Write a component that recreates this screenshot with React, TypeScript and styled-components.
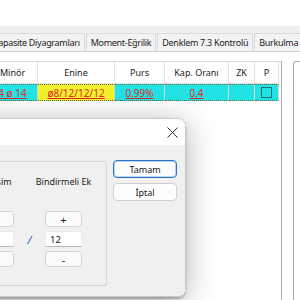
import styled, { createGlobalStyle } from "styled-components";

const GlobalStyle = createGlobalStyle`
  html, body {
    margin: 0;
    padding: 0;
    background: #ffffff;
  }
  body {
    font-family: "Noto Sans", "Open Sans", sans-serif;
    font-size: 9px;
    color: #1b1b1b;
  }
`;

const Screen = styled.div`
  position: relative;
  width: 300px;
  height: 300px;
  overflow: hidden;
  background: #ffffff;
  display: flex;
  flex-direction: column;
`;

const TopSpace = styled.div`
  height: 26px;
  background: #ffffff;
`;

const TabArea = styled.div`
  height: 25px;
  background: #f0f0f0;
  border-bottom: 1px solid #d6d6d6;
  display: flex;
  align-items: flex-end;
`;

const TabStrip = styled.div`
  display: flex;
  margin-left: -12px;
`;

const Tab = styled.div`
  height: 17px;
  padding: 0 4px;
  display: flex;
  align-items: center;
  background: #f3f3f3;
  border: 1px solid #dadada;
  border-bottom: none;
  margin-right: 1px;
  white-space: nowrap;
  letter-spacing: -0.3px;
  color: #222;
`;

const Content = styled.div`
  flex: 1;
  display: flex;
  padding-top: 9px;
  background: #ffffff;
`;

const GridWrap = styled.div`
  width: 281px;
  border-right: 1px solid #a8a8b0;
  display: flex;
  flex-direction: column;
  overflow: hidden;
`;

const Grid = styled.div`
  display: grid;
  grid-template-columns: 50px 77px 50px 64px 26px 24px;
  grid-template-rows: 22px 17px;
  margin-left: -12px;
  border-top: 1px solid #dadada;
`;

const HeadCell = styled.div`
  display: flex;
  align-items: center;
  justify-content: center;
  border-right: 1px solid #e2e2e2;
  border-bottom: 1px solid #e2e2e2;
  white-space: nowrap;
  color: #1b1b1b;
`;

const DataCell = styled.div<{ $bg: string }>`
  display: flex;
  align-items: center;
  justify-content: center;
  background: ${(p) => p.$bg};
  border-top: 1px dotted #6a6a40;
  border-bottom: 1px dotted #6a6a40;
  border-right: 1px solid #d8d8d8;
  color: #e3262a;
  text-decoration: underline;
  white-space: nowrap;
  font-size: 10px;
`;

const Check = styled.span`
  width: 9px;
  height: 9px;
  border: 1px solid #2b6d6d;
  background: transparent;
`;

const SidePanel = styled.div`
  margin-left: 11px;
  flex: 1;
  border: 1px solid #a8a8b0;
  border-right: none;
  border-bottom: none;
  border-top-left-radius: 3px;
`;

const Dialog = styled.div`
  position: absolute;
  left: -114px;
  top: 118px;
  width: 300px;
  height: 179px;
  border-radius: 8px;
  overflow: hidden;
  display: flex;
  flex-direction: column;
  border: 1px solid #c8c8c8;
  box-sizing: border-box;
  box-shadow: 0 4px 30px rgba(0, 0, 0, 0.3), 0 2px 2px rgba(0, 0, 0, 0.25);
`;

const TitleBar = styled.div`
  height: 26px;
  background: #ffffff;
  display: flex;
  align-items: center;
  justify-content: flex-end;
  padding-right: 7px;
`;

const CloseBtn = styled.div`
  width: 12px;
  height: 12px;
  display: flex;
  align-items: center;
  justify-content: center;
`;

const Body = styled.div`
  flex: 1;
  background: #f0f0f0;
  display: flex;
  gap: 6px;
  padding: 15px 8px 10px 13px;
`;

const GroupWrap = styled.div`
  flex: 1;
  display: flex;
  margin-top: 1px;
`;

const GroupBox = styled.div`
  flex: 1;
  border: 1px solid #d8d8d8;
  border-radius: 2px;
  display: grid;
  grid-template-columns: 37px 31px 37px;
  grid-template-rows: 33px 16px 16px 16px;
  row-gap: 4px;
  justify-content: end;
  align-content: start;
  padding: 12px 24px 0 0;
`;

const ColLabel = styled.div<{ $col: number }>`
  grid-column: ${(p) => p.$col};
  grid-row: 1;
  align-self: start;
  height: 14px;
  display: flex;
  align-items: center;
  justify-content: center;
  white-space: nowrap;
`;

const StepBtn = styled.div<{ $col: number; $row: number }>`
  grid-column: ${(p) => p.$col};
  grid-row: ${(p) => p.$row};
  background: #fbfbfb;
  border: 1px solid #d3d3d3;
  border-radius: 4px;
  display: flex;
  align-items: center;
  justify-content: center;
  font-size: 11px;
`;

const Field = styled.div<{ $col: number }>`
  grid-column: ${(p) => p.$col};
  grid-row: 3;
  background: #ffffff;
  border: 1px solid #ececec;
  border-bottom-color: #b8b8b8;
  display: flex;
  align-items: center;
  padding-left: 4px;
  font-size: 9.5px;
`;

const Slash = styled.div`
  grid-column: 2;
  grid-row: 3;
  display: flex;
  align-items: center;
  justify-content: center;
  color: #1b5ea8;
  font-size: 11px;
  font-style: italic;
`;

const ButtonCol = styled.div`
  width: 64px;
  display: flex;
  flex-direction: column;
  gap: 5px;
`;

const DlgButton = styled.div<{ $primary?: boolean }>`
  height: 16px;
  border-radius: 4px;
  background: #fdfdfd;
  border: 1px solid ${(p) => (p.$primary ? "#2a74c4" : "#d0d0d0")};
  box-shadow: ${(p) => (p.$primary ? "inset 0 0 0 1px #b9d5f2" : "none")};
  display: flex;
  align-items: center;
  justify-content: center;
  color: #1b1b1b;
`;

const headers = ["Minör", "Enine", "Purs", "Kap. Oranı", "ZK", "P"];

export default function App() {
  return (
    <>
      <GlobalStyle />
      <Screen>
        <TopSpace />
        <TabArea>
          <TabStrip>
            <Tab>Kapasite Diyagramları</Tab>
            <Tab>Moment-Eğrilik</Tab>
            <Tab>Denklem 7.3 Kontrolü</Tab>
            <Tab>Burkulma</Tab>
          </TabStrip>
        </TabArea>
        <Content>
          <GridWrap>
            <Grid>
              {headers.map((h) => (
                <HeadCell key={h}>{h}</HeadCell>
              ))}
              <DataCell $bg="#22e3e3">4 ø 14</DataCell>
              <DataCell $bg="#f2f22c">ø8/12/12/12</DataCell>
              <DataCell $bg="#22e3e3">0.99%</DataCell>
              <DataCell $bg="#22e3e3">0.4</DataCell>
              <DataCell $bg="#22e3e3" />
              <DataCell $bg="#22e3e3">
                <Check />
              </DataCell>
            </Grid>
          </GridWrap>
          <SidePanel />
        </Content>

        <Dialog>
          <TitleBar>
            <CloseBtn>
              <svg width="11" height="11" viewBox="0 0 11 11">
                <path d="M0.5 0.5 L10.5 10.5 M10.5 0.5 L0.5 10.5" stroke="#333" strokeWidth="1" />
              </svg>
            </CloseBtn>
          </TitleBar>
          <Body>
            <GroupWrap>
              <GroupBox>
                <ColLabel $col={1}>Kesişim</ColLabel>
                <ColLabel $col={3}>Bindirmeli Ek</ColLabel>
                <StepBtn $col={1} $row={2} />
                <StepBtn $col={3} $row={2}>+</StepBtn>
                <Field $col={1} />
                <Slash>/</Slash>
                <Field $col={3}>12</Field>
                <StepBtn $col={1} $row={4} />
                <StepBtn $col={3} $row={4}>-</StepBtn>
              </GroupBox>
            </GroupWrap>
            <ButtonCol>
              <DlgButton $primary>Tamam</DlgButton>
              <DlgButton>İptal</DlgButton>
            </ButtonCol>
          </Body>
        </Dialog>
      </Screen>
    </>
  );
}
